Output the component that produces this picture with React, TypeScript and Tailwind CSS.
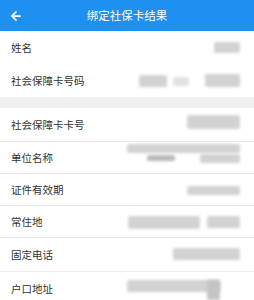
import { ArrowLeft } from "lucide-react";

type Blob = { x: number; w: number; y: number; h: number; shade?: string };

const Row = ({ label, blobs, height = "h-[33px]", border = true }: { label: string; blobs: Blob[]; height?: string; border?: boolean }) => (
  <div className={`relative flex items-center ${height} pl-[11px] bg-white ${border ? "border-b border-[#ececec]" : ""}`}>
    <span className="text-[10.5px] text-[#333]">{label}</span>
    {blobs.map((b, i) => (
      <div
        key={i}
        className="absolute rounded-[2px] blur-[1.5px]"
        style={{ left: b.x, width: b.w, top: b.y, height: b.h, background: b.shade ?? "#d2d2d2" }}
      />
    ))}
  </div>
);

export default function App() {
  return (
    <div className="w-[254px] h-[300px] overflow-hidden bg-white" style={{ fontFamily: '"Noto Sans CJK SC", "Noto Sans", sans-serif' }}>
      {/* Header */}
      <div className="relative flex items-center justify-center h-[31px] bg-[#1e90f0]">
        <ArrowLeft className="absolute left-[9px] w-[14px] h-[14px] text-white" strokeWidth={3} />
        <span className="text-[11.5px] text-white">绑定社保卡结果</span>
      </div>

      <Row label="姓名" height="h-[34px]" border={false} blobs={[{ x: 214, w: 26, y: 11, h: 11 }]} />
      <Row
        label="社会保障卡号码"
        height="h-[32px]"
        border={false}
        blobs={[
          { x: 139, w: 28, y: 10, h: 12 },
          { x: 173, w: 16, y: 12, h: 9, shade: "#e2e2e2" },
          { x: 205, w: 35, y: 9, h: 13 },
        ]}
      />

      <div className="h-[11px] bg-[#f0f0f0]" />

      <Row label="社会保障卡卡号" height="h-[34px]" blobs={[{ x: 187, w: 53, y: 7, h: 14 }]} />
      <Row
        label="单位名称"
        height="h-[32px]"
        blobs={[
          { x: 127, w: 113, y: 2, h: 9 },
          { x: 147, w: 28, y: 13, h: 6, shade: "#b8b8b8" },
          { x: 200, w: 40, y: 12, h: 9 },
        ]}
      />
      <Row label="证件有效期" height="h-[32px]" blobs={[{ x: 187, w: 53, y: 12, h: 9 }]} />
      <Row
        label="常住地"
        height="h-[32px]"
        blobs={[
          { x: 128, w: 72, y: 10, h: 13 },
          { x: 207, w: 33, y: 10, h: 12 },
        ]}
      />
      <Row label="固定电话" height="h-[34px]" blobs={[{ x: 173, w: 67, y: 10, h: 12 }]} />
      <Row
        label="户口地址"
        height="h-[34px]"
        border={false}
        blobs={[
          { x: 127, w: 93, y: 8, h: 12 },
          { x: 207, w: 13, y: 8, h: 20, shade: "#c4c4c4" },
        ]}
      />
    </div>
  );
}
